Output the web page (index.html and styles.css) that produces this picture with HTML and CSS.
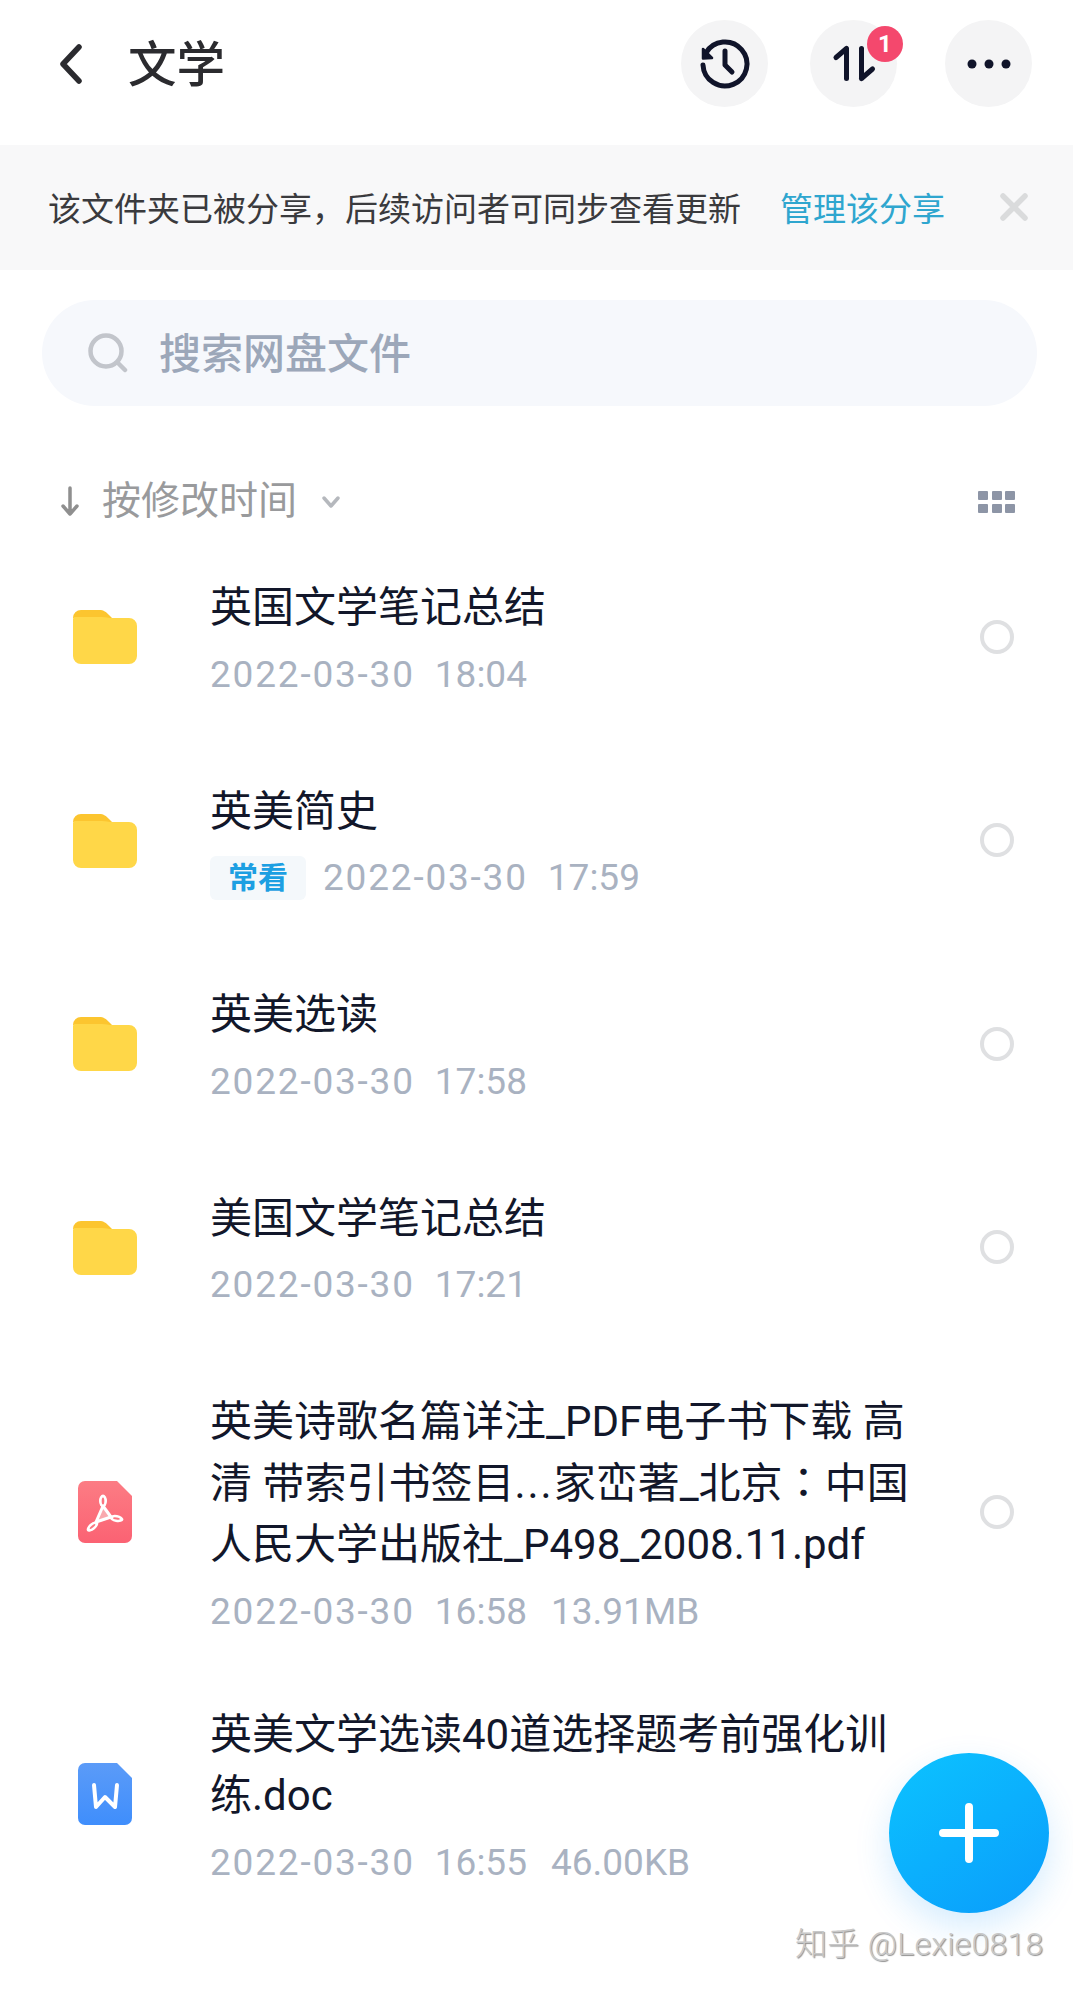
FILE: index.html
```html
<!DOCTYPE html>
<html lang="zh-CN">
<head>
<meta charset="utf-8">
<title>文学</title>
<link rel="stylesheet" href="styles.css">
</head>
<body>
<svg class="defs" width="0" height="0" aria-hidden="true">
  <defs>
    <symbol id="folder" viewBox="0 0 64 55">
      <path d="M0 9a8 8 0 0 1 8-8h18c5 0 7 2 10 5l3 3H0z" fill="#fcc52f"/>
      <path d="M0 10a2 2 0 0 1 2-2h27l5 0.5 3 0.5h19a8 8 0 0 1 8 8v30a8 8 0 0 1-8 8H8a8 8 0 0 1-8-8z" fill="#ffd748"/>
    </symbol>
    <linearGradient id="pdfg" x1="0" y1="0" x2="0" y2="1"><stop offset="0" stop-color="#fc7c84"/><stop offset="1" stop-color="#fb6273"/></linearGradient>
    <linearGradient id="docg" x1="0" y1="0" x2="0" y2="1"><stop offset="0" stop-color="#5b9bf8"/><stop offset="1" stop-color="#3f8efc"/></linearGradient>
  </defs>
</svg>

<main class="app">
  <header class="topbar">
    <svg class="back" viewBox="0 0 26 40"><path d="M21 3 5 20l16 17" fill="none" stroke="#2b2b2f" stroke-width="5.500" stroke-linecap="round" stroke-linejoin="round"/></svg>
    <h1 class="page-title">文学</h1>
    <div class="actions">
      <div class="circle">
        <svg class="act-icon" viewBox="0 0 56 56"><path d="M8.900 17A22 22 0 1 1 6 29" fill="none" stroke="#10142a" stroke-width="5" stroke-linecap="round"/><path d="M6 13v9.500l9-.5z" fill="#10142a" stroke="#10142a" stroke-width="2.500" stroke-linejoin="round"/><path d="M28 15v14l7 7" fill="none" stroke="#10142a" stroke-width="5" stroke-linecap="round" stroke-linejoin="round"/></svg>
      </div>
      <div class="circle circle-transfer">
        <svg class="act-icon" viewBox="0 0 56 56"><path d="M10 21.500 20.500 12.500v30M35.500 42.500v-30M35.500 42.500l11-9.500" fill="none" stroke="#10142a" stroke-width="5" stroke-linecap="round" stroke-linejoin="round"/></svg>
        <span class="badge">1</span>
      </div>
      <div class="circle">
        <svg class="act-icon" viewBox="0 0 56 56"><circle cx="11" cy="28" r="4.500" fill="#10142a"/><circle cx="28" cy="28" r="4.500" fill="#10142a"/><circle cx="45" cy="28" r="4.500" fill="#10142a"/></svg>
      </div>
    </div>
  </header>

  <section class="banner">
    <span class="banner-text">该文件夹已被分享，后续访问者可同步查看更新</span>
    <span class="banner-link">管理该分享</span>
    <svg class="banner-close" viewBox="0 0 28 28"><path d="M3 3l22 22M25 3 3 25" fill="none" stroke="#dadbdc" stroke-width="5.500" stroke-linecap="round"/></svg>
  </section>

  <div class="search">
    <svg class="search-icon" viewBox="0 0 40 40"><circle cx="18" cy="18" r="15.500" fill="none" stroke="#c2c5cb" stroke-width="4.500"/><path d="M31 31l6 6" stroke="#c2c5cb" stroke-width="4.500" stroke-linecap="round"/></svg>
    <span class="search-text">搜索网盘文件</span>
  </div>

  <div class="sortbar">
    <svg class="sort-arrow" viewBox="0 0 18 30"><path d="M9 2v25M2 20l7 8 7-8" fill="none" stroke="#8f8f8f" stroke-width="3.500" stroke-linecap="round" stroke-linejoin="round"/></svg>
    <span class="sort-label">按修改时间</span>
    <svg class="sort-caret" viewBox="0 0 18 12"><path d="M2 2l7 8 7-8" fill="none" stroke="#b5b8bd" stroke-width="3.500" stroke-linecap="round" stroke-linejoin="round"/></svg>
    <div class="grid-toggle"><i></i><i></i><i></i><i></i><i></i><i></i></div>
  </div>

  <ul class="files">
    <li class="row">
      <svg class="ficon folder"><use href="#folder"/></svg>
      <div class="info"><div class="name">英国文学笔记总结</div><div class="meta"><span class="date">2022-03-30</span><span class="extra">18:04</span></div></div>
      <span class="radio"></span>
    </li>
    <li class="row">
      <svg class="ficon folder"><use href="#folder"/></svg>
      <div class="info"><div class="name">英美简史</div><div class="meta"><span class="tag">常看</span><span class="date">2022-03-30</span><span class="extra">17:59</span></div></div>
      <span class="radio"></span>
    </li>
    <li class="row">
      <svg class="ficon folder"><use href="#folder"/></svg>
      <div class="info"><div class="name">英美选读</div><div class="meta"><span class="date">2022-03-30</span><span class="extra">17:58</span></div></div>
      <span class="radio"></span>
    </li>
    <li class="row">
      <svg class="ficon folder"><use href="#folder"/></svg>
      <div class="info"><div class="name">美国文学笔记总结</div><div class="meta"><span class="date">2022-03-30</span><span class="extra">17:21</span></div></div>
      <span class="radio"></span>
    </li>
    <li class="row">
      <svg class="ficon doc" viewBox="0 0 54 62">
        <path d="M7 0h32l15 15v40a7 7 0 0 1-7 7H7a7 7 0 0 1-7-7V7a7 7 0 0 1 7-7z" fill="url(#pdfg)"/>
        <path d="M25 25 18 41l15-5z" fill="#f9a9ae" stroke="#fff" stroke-width="3" stroke-linejoin="round"/>
        <g fill="#fff">
          <ellipse cx="25" cy="20" rx="4" ry="6.500"/>
          <ellipse cx="14.500" cy="45.500" rx="7" ry="3.500" transform="rotate(-40 14.500 45.500)"/>
          <ellipse cx="38.500" cy="37.500" rx="7" ry="3.500" transform="rotate(10 38.500 37.500)"/>
        </g>
        <g fill="#fb7580">
          <ellipse cx="25" cy="20" rx="1.300" ry="3.500"/>
          <ellipse cx="14.500" cy="45.500" rx="3.500" ry="1.100" transform="rotate(-40 14.500 45.500)"/>
          <ellipse cx="38.500" cy="37.500" rx="3.500" ry="1.100" transform="rotate(10 38.500 37.500)"/>
        </g>
      </svg>
      <div class="info"><div class="name">英美诗歌名篇详注_PDF电子书下载 高清 带索引书签目<span class="dots">...</span>家峦著_北京<span class="colon" lang="zh-TW">：</span>中国人民大学出版社_P498_2008.11.pdf</div><div class="meta"><span class="date">2022-03-30</span><span class="extra">16:58</span><span class="extra">13.91MB</span></div></div>
      <span class="radio"></span>
    </li>
    <li class="row row-tight">
      <svg class="ficon doc" viewBox="0 0 54 62">
        <path d="M7 0h32l15 15v40a7 7 0 0 1-7 7H7a7 7 0 0 1-7-7V7a7 7 0 0 1 7-7z" fill="url(#docg)"/>
        <path d="M16 22l2 22 9-10 10 10 2-22" fill="none" stroke="#fff" stroke-width="4" stroke-linecap="round" stroke-linejoin="round"/>
      </svg>
      <div class="info"><div class="name">英美文学选读40道选择题考前强化训练.doc</div><div class="meta"><span class="date">2022-03-30</span><span class="extra">16:55</span><span class="extra">46.00KB</span></div></div>
    </li>
  </ul>

  <button class="fab" type="button" aria-label="新建"><svg class="fab-icon" viewBox="0 0 60 60"><path d="M30 4v52M4 30h52" fill="none" stroke="#fff" stroke-width="8" stroke-linecap="round"/></svg></button>
  <div class="watermark">知乎 @Lexie0818</div>
</main>
</body>
</html>
```

FILE: styles.css
```css
* { box-sizing: border-box; }
html, body { margin: 0; padding: 0; background: #fff; }
body { font-family: Roboto, "Noto Sans CJK SC", sans-serif; color: #12172a; }
.defs { display: block; height: 0; }
.app { position: relative; width: 1073px; height: 1989px; overflow: hidden; background: #fff; }

.topbar { height: 145px; display: flex; align-items: center; padding: 0 41px 18px 58px; }
.back { width: 26px; height: 40px; margin-right: 44px; margin-top: 1px; }
.page-title { margin: 0; padding-top: 4px; font-size: 48.5px; font-weight: 500; line-height: 60px; color: #2b2b2f; }
.actions { margin-left: auto; display: flex; gap: 42px; }
.circle { position: relative; width: 87px; height: 87px; border-radius: 50%; background: #f4f4f5; display: flex; align-items: center; justify-content: center; }
.circle-transfer { margin-right: 6px; }
.act-icon { width: 56px; height: 56px; }
.badge { position: absolute; top: 6px; right: -6px; width: 36px; height: 36px; border-radius: 50%; background: #f4486d; color: #fff; font-size: 24px; font-weight: 700; line-height: 36px; text-align: center; }

.banner { height: 125px; background: #f8f8f9; display: flex; align-items: center; padding: 0 45px 1px 48px; }
.banner-text { font-size: 33px; color: #3a3a3d; white-space: nowrap; width: 691px; }
.banner-link { font-size: 33px; color: #2fa6cf; margin-left: 41px; white-space: nowrap; }
.banner-close { width: 28px; height: 28px; margin-left: auto; }

.search { margin: 30px 36px 0 42px; height: 106px; border-radius: 53px; background: #f6f8fc; display: flex; align-items: center; padding-left: 46px; }
.search-icon { width: 40px; height: 40px; margin-right: 31px; }
.search-text { font-size: 42px; font-weight: 500; color: #9ca7b9; line-height: 1; padding-top: 4px; }

.sortbar { margin-top: 66px; height: 58px; display: flex; align-items: center; padding: 0 58px 0 61px; }
.sort-arrow { width: 18px; height: 30px; margin-right: 23px; }
.sort-label { font-size: 39px; color: #999a9c; white-space: nowrap; line-height: 54px; }
.sort-caret { width: 18px; height: 12px; margin-left: 25px; margin-top: 2px; }
.grid-toggle { margin-left: auto; margin-top: 2px; display: grid; grid-template-columns: repeat(3, 10px); grid-template-rows: repeat(2, 9px); gap: 4px 3.5px; }
.grid-toggle i { background: #8d95a6; display: block; border-radius: 1px; }

.files { list-style: none; margin: 5px 0 0; padding: 0; }
.row { display: flex; align-items: center; padding: 42px 0 38px; position: relative; }
.row-tight { margin-top: -14px; }
.ficon { flex: none; display: block; }
.folder { width: 64px; height: 55px; margin: -4px 73px 0 73px; }
.doc { width: 54px; height: 62px; margin: -4px 78px 0 78px; }
.info { width: 706px; }
.name { font-size: 42px; line-height: 61.5px; color: #12172a; }
.dots { letter-spacing: 2px; }
.colon { font-family: Roboto, "Noto Sans CJK TC", sans-serif; }
.meta { display: flex; align-items: center; margin-top: 10px; font-size: 37px; line-height: 52px; color: #a9b2c1; white-space: nowrap; height: 52px; }
.date { letter-spacing: 1.8px; }
.extra { margin-left: 20px; }
.extra + .extra { margin-left: 24px; }
.tag { width: 96px; height: 44px; margin-right: 17px; border-radius: 6px; background: #f4f8fb; color: #1d9fe2; font-size: 30px; font-weight: 700; line-height: 44px; text-align: center; }
.radio { width: 34px; height: 34px; margin: -4px 0 0 64px; border-radius: 50%; border: 4px solid #dfe0e2; flex: none; }

.fab { position: absolute; left: 889px; top: 1753px; width: 160px; height: 160px; padding: 0; border: 0; border-radius: 50%; background: linear-gradient(145deg, #0cc3ff, #0a9cfb); box-shadow: 0 14px 34px rgba(20, 150, 250, 0.18); display: flex; align-items: center; justify-content: center; }
.fab-icon { width: 60px; height: 60px; }
.watermark { position: absolute; left: 795px; top: 1925px; font-size: 32px; font-weight: 300; letter-spacing: 0.3px; line-height: 38px; color: #c8c8c8; white-space: nowrap; text-shadow: 1px 1px 1px #8f8f8f; }
```
